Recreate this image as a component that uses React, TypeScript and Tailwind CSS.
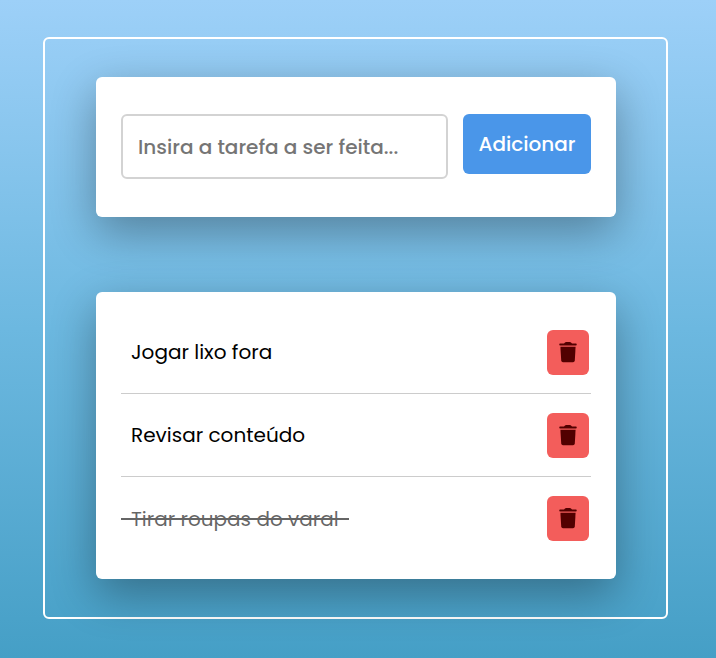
import { useState } from "react";
import type { FormEvent } from "react";

type Task = { id: number; text: string; done: boolean };

const initialTasks: Task[] = [
  { id: 1, text: "Jogar lixo fora", done: false },
  { id: 2, text: "Revisar conteúdo", done: false },
  { id: 3, text: "Tirar roupas do varal", done: true },
];

function TrashIcon() {
  return (
    <svg viewBox="0 0 18 21" className="h-[21px] w-[18px]" fill="currentColor" aria-hidden="true">
      <path d="M1 1.500H5Q6 0 7 0H11Q12 0 13 1.500H17Q17.700 1.500 17.700 2.200V2.800Q17.700 3.500 17 3.500H1Q.3 3.500 .3 2.800V2.200Q.3 1.500 1 1.500Z" />
      <path d="M1.400 4.700H16.600L15.800 18.500Q15.600 20.200 14 20.200H4Q2.400 20.200 2.200 18.500Z" />
    </svg>
  );
}

export default function App() {
  const [tasks, setTasks] = useState<Task[]>(initialTasks);
  const [draft, setDraft] = useState("");

  function addTask(event: FormEvent) {
    event.preventDefault();
    const text = draft.trim();
    if (!text) return;
    setTasks([...tasks, { id: Date.now(), text, done: false }]);
    setDraft("");
  }

  function toggleTask(id: number) {
    setTasks(tasks.map((task) => (task.id === id ? { ...task, done: !task.done } : task)));
  }

  return (
    <div className="min-h-screen bg-linear-to-b from-[#9dd0f8] via-[#6cb8e0] to-[#459fc6] pt-[37px] pr-12 pb-[39px] pl-[43px] font-[Poppins,Inter,sans-serif] text-xl text-black">
      <main className="flex flex-col gap-[75px] rounded-md border-2 border-white py-[38px] pr-[50px] pl-[51px]">
        <form
          onSubmit={addTask}
          className="flex items-start gap-[15px] rounded-md bg-white px-[25px] pt-[37px] pb-[38px] font-medium shadow-[0_15px_45px_rgba(0,0,0,0.33)]"
        >
          <input
            type="text"
            aria-label="Nova tarefa"
            placeholder="Insira a tarefa a ser feita..."
            value={draft}
            onChange={(event) => setDraft(event.target.value)}
            className="h-[65px] min-w-0 flex-1 rounded-md border-2 border-[#d3d3d3] px-[15px] outline-none placeholder:text-[#757575]"
          />
          <button type="submit" className="h-[60px] w-32 rounded-md bg-[#4a96e9] text-white">
            Adicionar
          </button>
        </form>

        <ul className="rounded-md bg-white px-[25px] py-[19px] shadow-[0_15px_45px_rgba(0,0,0,0.33)]">
          {tasks.map((task) => (
            <li
              key={task.id}
              className="flex h-[83px] items-center justify-between border-b border-[#cccccc] pr-0.5 last:border-b-0"
            >
              <button
                type="button"
                aria-pressed={task.done}
                onClick={() => toggleTask(task.id)}
                className={task.done ? "relative px-2.5 text-left opacity-60" : "relative px-2.5 text-left"}
              >
                {task.text}
                {task.done && <span className="absolute inset-x-0 top-1/2 h-0.5 -translate-y-1/2 bg-black" />}
              </button>
              <button
                type="button"
                aria-label={`Excluir ${task.text}`}
                onClick={() => setTasks(tasks.filter((other) => other.id !== task.id))}
                className="flex h-[45px] w-[42px] items-center justify-center rounded-md bg-[#f35d5b] text-[#520000]"
              >
                <TrashIcon />
              </button>
            </li>
          ))}
        </ul>
      </main>
    </div>
  );
}
